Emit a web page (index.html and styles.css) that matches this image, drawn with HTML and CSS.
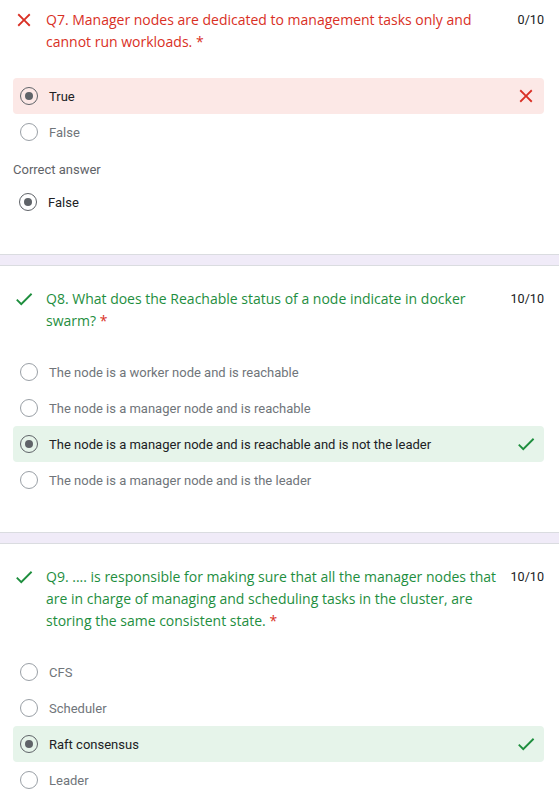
FILE: index.html
```html
<!DOCTYPE html>
<html>
<head>
<meta charset="utf-8">
<link rel="stylesheet" href="styles.css">
</head>
<body>
<div class="card card-first">
  <div class="head">
    <svg class="qicon" viewBox="0 0 24 24"><path fill="#d93025" d="M19 6.41L17.59 5 12 10.59 6.41 5 5 6.41 10.59 12 5 17.59 6.41 19 12 13.41 17.59 19 19 17.59 13.41 12z"/></svg>
    <div class="title wrong">Q7. Manager nodes are dedicated to management tasks only and cannot run workloads. <span class="req">*</span></div>
    <div class="score">0/10</div>
  </div>
  <div class="opts opts-first">
    <div class="opt sel bad"><span class="radio on"></span><span class="label">True</span>
      <svg class="ricon" viewBox="0 0 24 24"><path fill="#d93025" d="M19 6.41L17.59 5 12 10.59 6.41 5 5 6.41 10.59 12 5 17.59 6.41 19 12 13.41 17.59 19 19 17.59 13.41 12z"/></svg></div>
    <div class="opt"><span class="radio"></span><span class="label">False</span></div>
  </div>
  <div class="correct-label">Correct answer</div>
  <div class="opt correct"><span class="radio on"></span><span class="label">False</span></div>
</div>
<div class="sep"></div>
<div class="card">
  <div class="head">
    <svg class="qicon" viewBox="0 0 24 24"><path fill="#1e8e3e" d="M9 16.17L4.83 12l-1.42 1.41L9 19 21 7l-1.41-1.41z"/></svg>
    <div class="title right">Q8. What does the Reachable status of a node indicate in docker swarm? <span class="req">*</span></div>
    <div class="score">10/10</div>
  </div>
  <div class="opts">
    <div class="opt"><span class="radio"></span><span class="label">The node is a worker node and is reachable</span></div>
    <div class="opt"><span class="radio"></span><span class="label">The node is a manager node and is reachable</span></div>
    <div class="opt sel good"><span class="radio on"></span><span class="label">The node is a manager node and is reachable and is not the leader</span>
      <svg class="ricon" viewBox="0 0 24 24"><path fill="#1e8e3e" d="M9 16.17L4.83 12l-1.42 1.41L9 19 21 7l-1.41-1.41z"/></svg></div>
    <div class="opt"><span class="radio"></span><span class="label">The node is a manager node and is the leader</span></div>
  </div>
</div>
<div class="sep"></div>
<div class="card">
  <div class="head">
    <svg class="qicon" viewBox="0 0 24 24"><path fill="#1e8e3e" d="M9 16.17L4.83 12l-1.42 1.41L9 19 21 7l-1.41-1.41z"/></svg>
    <div class="title right">Q9. .... is responsible for making sure that all the manager nodes that are in charge of managing and scheduling tasks in the cluster, are storing the same consistent state. <span class="req">*</span></div>
    <div class="score">10/10</div>
  </div>
  <div class="opts">
    <div class="opt"><span class="radio"></span><span class="label">CFS</span></div>
    <div class="opt"><span class="radio"></span><span class="label">Scheduler</span></div>
    <div class="opt sel good"><span class="radio on"></span><span class="label">Raft consensus</span>
      <svg class="ricon" viewBox="0 0 24 24"><path fill="#1e8e3e" d="M9 16.17L4.83 12l-1.42 1.41L9 19 21 7l-1.41-1.41z"/></svg></div>
    <div class="opt"><span class="radio"></span><span class="label">Leader</span></div>
  </div>
</div>
</body>
</html>
```
FILE: styles.css
```css
* { box-sizing: border-box; }
body {
  margin: 0;
  background: #fff;
  font-family: Roboto, "Liberation Sans", sans-serif;
  width: 559px;
}
.card {
  padding: 22px 15px 34px 13px;
  background: #fff;
}
.card-first { padding-top: 9px; }
.sep {
  height: 12px;
  background: #f0ebf8;
  border-top: 1px solid #dadce0;
  border-bottom: 1px solid #dadce0;
}
.head {
  display: flex;
  align-items: flex-start;
}
.qicon {
  width: 22px;
  height: 22px;
  flex: none;
  margin-right: 11px;
}
.title {
  flex: 1;
  font-family: "Open Sans", Roboto, sans-serif;
  font-size: 14px;
  line-height: 21.6px;
  padding-right: 3px;
}
.title.wrong { color: #d93025; }
.title.right { color: #1e8e3e; }
.req { color: #d93025; }
.score {
  flex: none;
  width: 40px;
  text-align: right;
  font-size: 12.6px;
  line-height: 21.6px;
  color: #202124;
}
.opts {
  margin-top: 23px;
}
.opts-first {
  margin-top: 26px;
}
.opt {
  display: flex;
  align-items: center;
  height: 36px;
  padding-left: 7px;
  border-radius: 4px;
}
.opt.sel.bad { background: #fce8e6; }
.opt.sel.good { background: #e6f4ea; }
.radio {
  flex: none;
  width: 18px;
  height: 18px;
  border: 1.8px solid #9aa0a6;
  border-radius: 50%;
  display: flex;
  align-items: center;
  justify-content: center;
  margin-right: 11px;
}
.radio.on { border-color: #5f6368; }
.radio.on::after {
  content: "";
  width: 8px;
  height: 8px;
  border-radius: 50%;
  background: #5f6368;
}
.label {
  flex: 1;
  font-size: 13px;
  color: #70757a;
}
.opt.sel .label, .opt.correct .label { color: #202124; }
.ricon {
  width: 22px;
  height: 22px;
  flex: none;
  margin-right: 7px;
}
.correct-label {
  margin-top: 12px;
  font-size: 13px;
  line-height: 16px;
  color: #5f6368;
}
.opt.correct {
  margin-top: 6px;
  padding-left: 6px;
}
```
